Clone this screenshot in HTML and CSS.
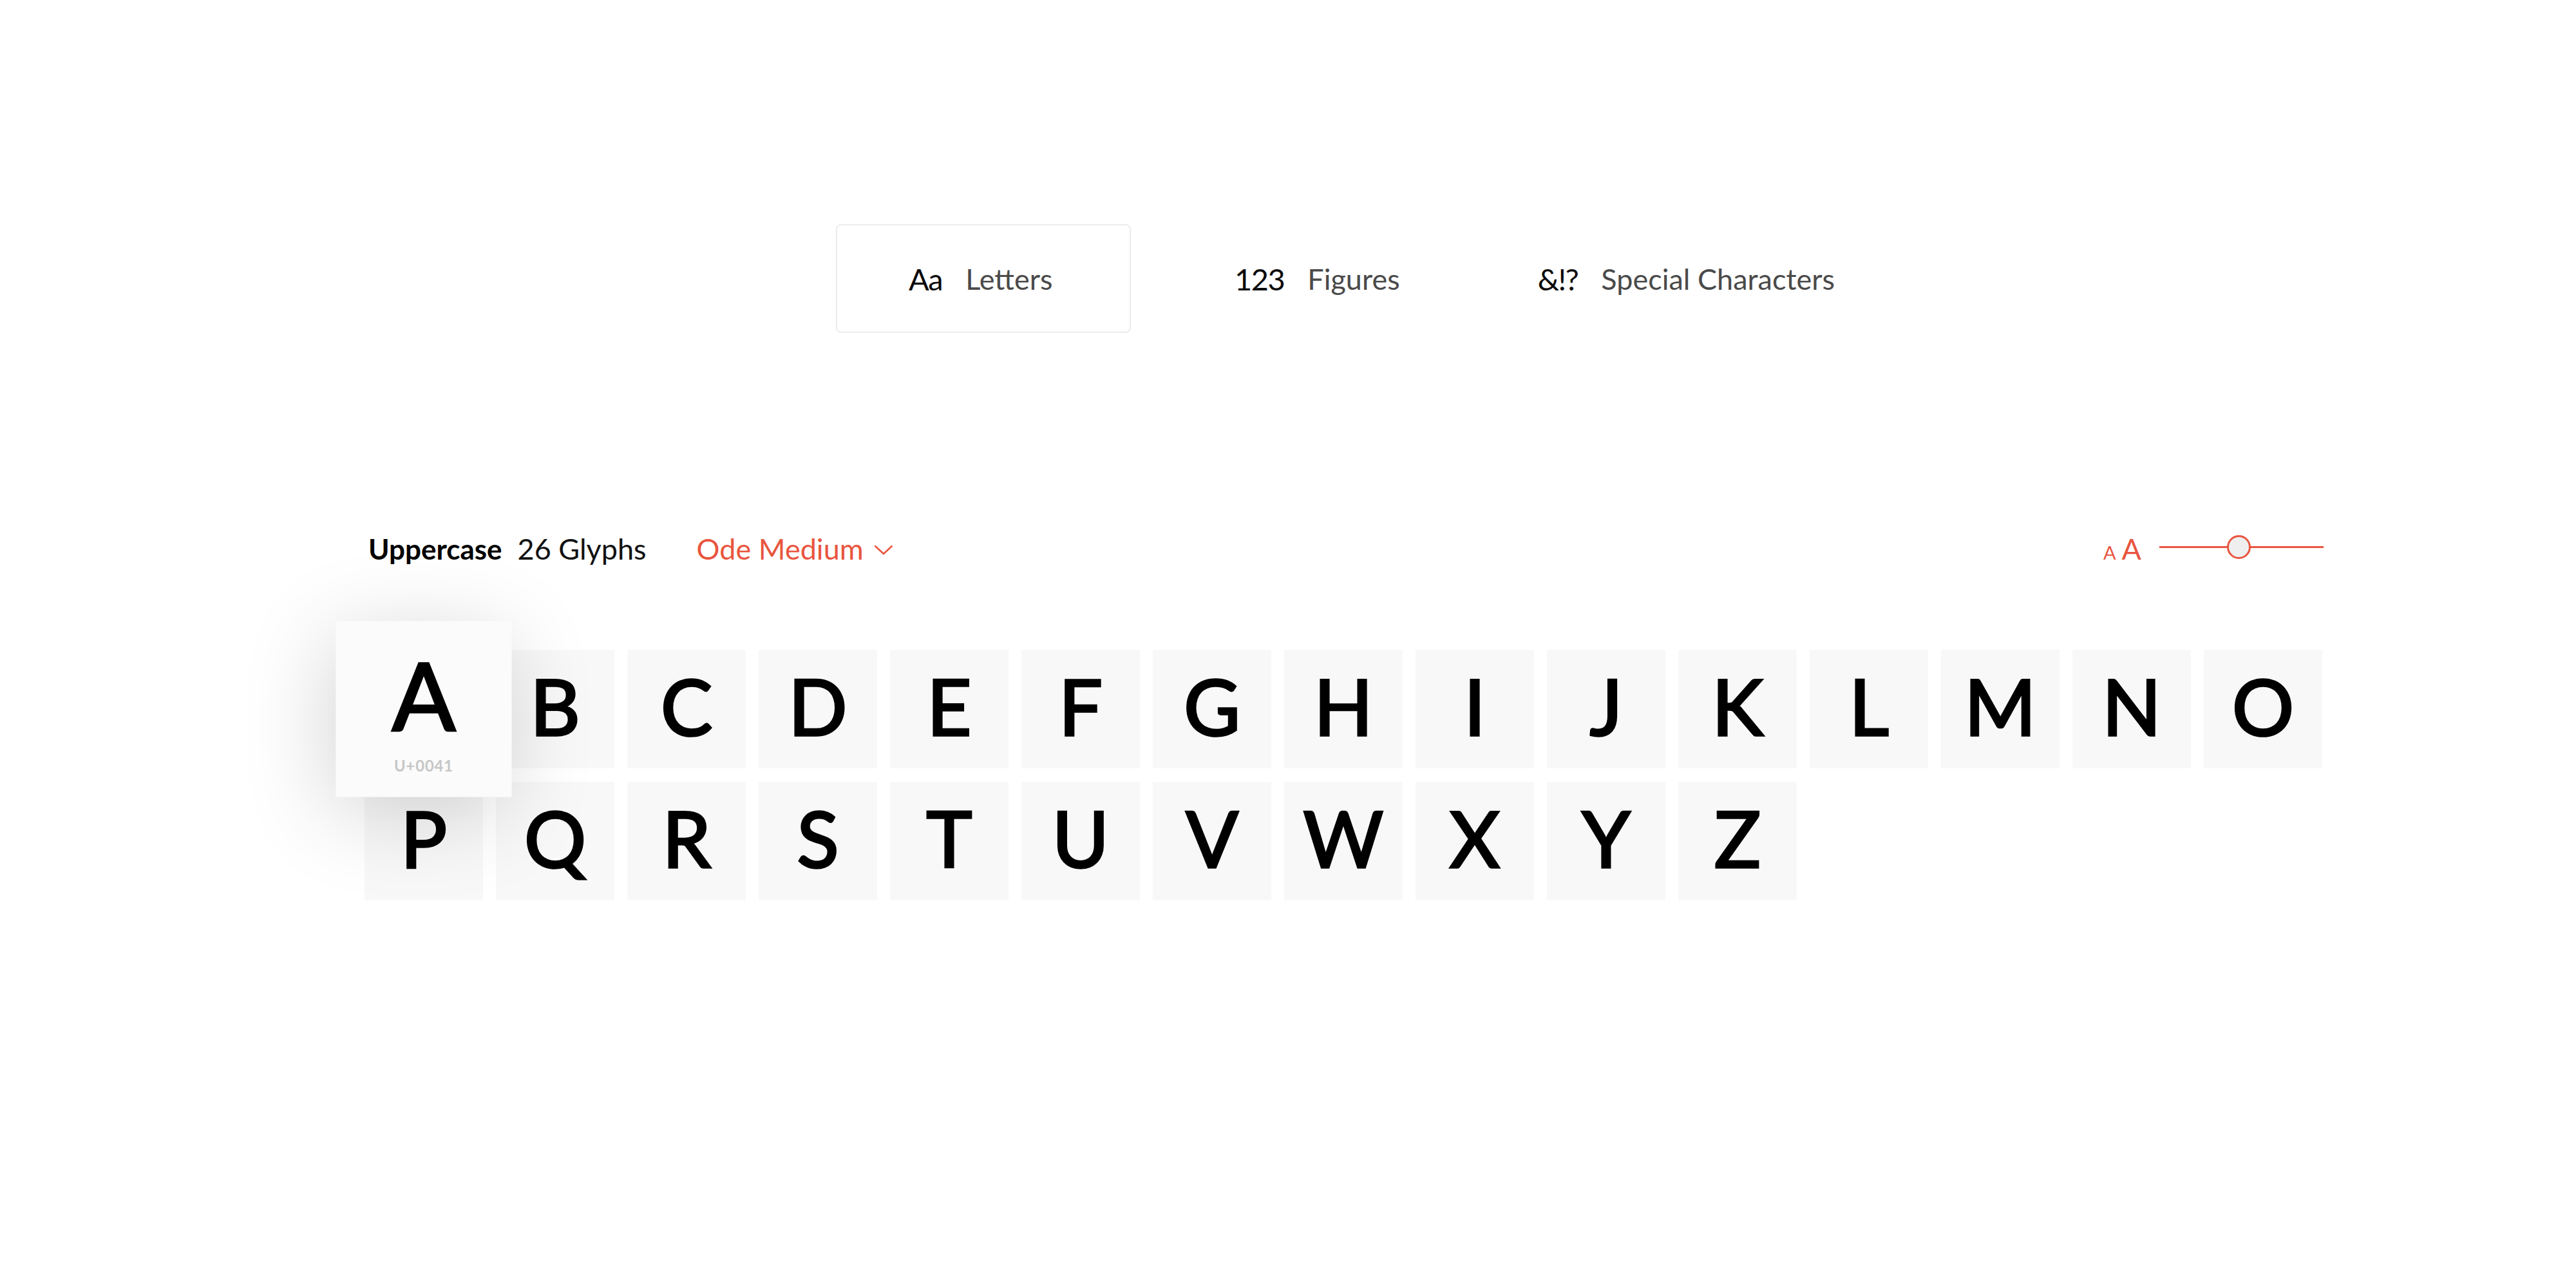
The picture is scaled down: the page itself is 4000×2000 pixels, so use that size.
FILE: index.html
```html
<!DOCTYPE html>
<html lang="en">
<head>
<meta charset="utf-8">
<title>Glyphs</title>
<link rel="stylesheet" href="styles.css">
</head>
<body>
<div class="page">
  <nav class="tabs">
    <div class="tab tab-active"><span class="tab-icon">Aa</span><span class="tab-label">Letters</span></div>
    <div class="tab tab-figures"><span class="tab-icon">123</span><span class="tab-label">Figures</span></div>
    <div class="tab tab-special"><span class="tab-icon">&amp;!?</span><span class="tab-label">Special Characters</span></div>
  </nav>

  <section class="glyphs">
    <header class="glyphs-head">
      <span class="set-name">Uppercase</span>
      <span class="set-count">26 Glyphs</span>
      <span class="font-select">Ode Medium
        <svg class="chevron" width="30" height="16" viewBox="0 0 30 16"><polyline points="1.5,1.5 15,14 28.5,1.5" fill="none" stroke="currentColor" stroke-width="2.6"/></svg>
      </span>
      <div class="size-control">
        <span class="size-small">A</span>
        <span class="size-big">A</span>
        <div class="slider"><span class="slider-knob"></span></div>
      </div>
    </header>

    <div class="grid">
      <div class="tile tile-active"><span class="tile-char">A</span><span class="tile-code">U+0041</span></div>
      <div class="tile"><span class="tile-char">B</span></div>
      <div class="tile"><span class="tile-char">C</span></div>
      <div class="tile"><span class="tile-char">D</span></div>
      <div class="tile"><span class="tile-char">E</span></div>
      <div class="tile"><span class="tile-char">F</span></div>
      <div class="tile"><span class="tile-char">G</span></div>
      <div class="tile"><span class="tile-char">H</span></div>
      <div class="tile"><span class="tile-char">I</span></div>
      <div class="tile"><span class="tile-char">J</span></div>
      <div class="tile"><span class="tile-char">K</span></div>
      <div class="tile"><span class="tile-char">L</span></div>
      <div class="tile"><span class="tile-char">M</span></div>
      <div class="tile"><span class="tile-char">N</span></div>
      <div class="tile"><span class="tile-char">O</span></div>
      <div class="tile"><span class="tile-char">P</span></div>
      <div class="tile"><span class="tile-char">Q</span></div>
      <div class="tile"><span class="tile-char">R</span></div>
      <div class="tile"><span class="tile-char">S</span></div>
      <div class="tile"><span class="tile-char">T</span></div>
      <div class="tile"><span class="tile-char">U</span></div>
      <div class="tile"><span class="tile-char">V</span></div>
      <div class="tile"><span class="tile-char">W</span></div>
      <div class="tile"><span class="tile-char">X</span></div>
      <div class="tile"><span class="tile-char">Y</span></div>
      <div class="tile"><span class="tile-char">Z</span></div>
    </div>
  </section>
</div>
</body>
</html>
```

FILE: styles.css
```css
* { box-sizing: border-box; }

html, body {
  margin: 0;
  padding: 0;
  background: #ffffff;
}

body {
  font-family: "Lato", "Open Sans", sans-serif;
  color: #111111;
}

.page {
  padding-top: 348px;
}

/* ---------- tabs ---------- */
.tabs {
  display: flex;
  align-items: stretch;
  margin-left: 1298px;
  gap: 98px;
}

.tab {
  height: 169px;
  display: flex;
  align-items: center;
  gap: 36px;
  padding: 0 56px;
  border: 2px solid transparent;
  border-radius: 8px;
}

.tab-active {
  width: 458px;
  padding: 0 0 0 111px;
  border-color: #ececec;
}

.tab-figures {
  margin-left: 5px;
}

.tab-icon {
  font-size: 47px;
  font-weight: 400;
  color: #0a0a0a;
  letter-spacing: -1.5px;
}

.tab-label {
  font-size: 45px;
  font-weight: 400;
  color: #4a4a4a;
}

/* ---------- glyph section ---------- */
.glyphs {
  margin-left: 566px;
  width: 3042px;
  margin-top: 308px;
}

.glyphs-head {
  display: flex;
  align-items: baseline;
  height: 54px;
  padding-left: 6px;
  font-size: 45px;
  line-height: 54px;
}

.set-name {
  font-weight: 700;
  font-size: 44px;
  color: #000;
}

.set-count {
  margin-left: 24px;
  color: #111;
}

.font-select {
  margin-left: 78px;
  color: #e9553f;
  display: flex;
  align-items: center;
  gap: 16px;
  align-self: center;
}

.chevron {
  margin-top: 4px;
}

.size-control {
  margin-left: auto;
  display: flex;
  align-items: baseline;
  color: #e9553f;
}

.size-small {
  font-size: 29px;
}

.size-big {
  font-size: 45px;
  margin-left: 9px;
}

.slider {
  position: relative;
  align-self: center;
  width: 255px;
  height: 3px;
  margin-left: 28px;
  margin-top: -12px;
  background: #e9553f;
}

.slider-knob {
  position: absolute;
  left: 105px;
  top: -17px;
  width: 37px;
  height: 37px;
  border-radius: 50%;
  background: #efefef;
  border: 3px solid #e9553f;
}

/* ---------- grid ---------- */
.grid {
  margin-top: 130px;
  display: grid;
  grid-template-columns: repeat(15, 184px);
  grid-auto-rows: 184px;
  column-gap: 20px;
  row-gap: 21px;
}

.tile {
  background: #f8f8f8;
  display: flex;
  align-items: center;
  justify-content: center;
  padding-bottom: 10px;
}

.tile-char {
  font-size: 120px;
  line-height: 1;
  font-weight: 400;
  color: #000;
  -webkit-text-stroke: 3.5px #000;
}

.tile-active {
  position: relative;
  z-index: 2;
  background: #fbfbfb;
  transform: scale(1.485);
  box-shadow: -6px 16px 90px rgba(0, 0, 0, 0.17);
  flex-direction: column;
  justify-content: flex-start;
  padding: 28px 0 0;
}

.tile-active .tile-char {
  font-size: 98px;
  -webkit-text-stroke: 2.4px #000;
}

.tile-code {
  margin-top: 17px;
  font-size: 16px;
  line-height: 1;
  font-weight: 700;
  letter-spacing: 0.6px;
  color: #c6c6c6;
}
```
